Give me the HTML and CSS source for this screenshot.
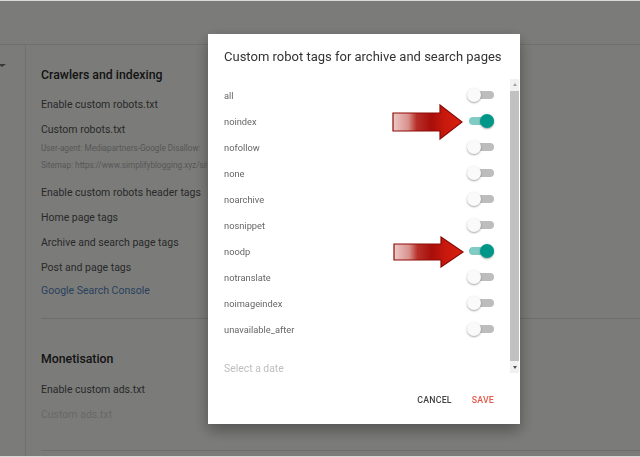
FILE: index.html
```html
<!DOCTYPE html>
<html lang="en">
<head>
    <meta charset="UTF-8">
    <title>Settings - Crawlers and indexing</title>
    <link rel="stylesheet" href="styles.css">
</head>
<body>

    <div class="page">
        <header class="topbar"></header>
        <div class="main">
            <aside class="sidebar"><span class="caret"></span></aside>
            <section class="settings">
                <div class="group">
                    <h2>Crawlers and indexing</h2>
                    <div class="item">Enable custom robots.txt</div>
                    <div class="item item-tight">Custom robots.txt</div>
                    <div class="hint">User-agent: Mediapartners-Google Disallow:</div>
                    <div class="hint hint-last">Sitemap: https://www.simplifyblogging.xyz/sitemap.xml</div>
                    <div class="item">Enable custom robots header tags</div>
                    <div class="item">Home page tags</div>
                    <div class="item">Archive and search page tags</div>
                    <div class="item item-short">Post and page tags</div>
                    <div class="item link">Google Search Console</div>
                </div>
                <div class="group group-second">
                    <h2>Monetisation</h2>
                    <div class="item">Enable custom ads.txt</div>
                    <div class="item disabled">Custom ads.txt</div>
                </div>
            </section>
        </div>
    </div>

    <div class="scrim"></div>

    <div class="dialog">
        <h1>Custom robot tags for archive and search pages</h1>

        <div class="dialog-body">
            <div class="tag-list">
                <div class="tag-row"><span>all</span><span class="toggle"></span></div>
                <div class="tag-row"><span>noindex</span><span class="toggle on"></span></div>
                <div class="tag-row"><span>nofollow</span><span class="toggle"></span></div>
                <div class="tag-row"><span>none</span><span class="toggle"></span></div>
                <div class="tag-row"><span>noarchive</span><span class="toggle"></span></div>
                <div class="tag-row"><span>nosnippet</span><span class="toggle"></span></div>
                <div class="tag-row"><span>noodp</span><span class="toggle on"></span></div>
                <div class="tag-row"><span>notranslate</span><span class="toggle"></span></div>
                <div class="tag-row"><span>noimageindex</span><span class="toggle"></span></div>
                <div class="tag-row"><span>unavailable_after</span><span class="toggle"></span></div>
                <div class="date-field">Select a date</div>
            </div>
            <div class="scrollbar">
                <span class="scroll-arrow up"></span>
                <span class="scroll-thumb"></span>
                <span class="scroll-arrow down"></span>
            </div>
        </div>

        <div class="actions">
            <button class="btn">CANCEL</button>
            <button class="btn btn-save">SAVE</button>
        </div>
    </div>

    <!-- red pointer arrows -->
    <svg class="pointer pointer-one" width="72" height="36" viewBox="0 0 72 36">
        <defs>
            <linearGradient id="arrowFill" x1="0" y1="0" x2="1" y2="0">
                <stop offset="0" stop-color="#edc9c6"/>
                <stop offset="0.22" stop-color="#d9918c"/>
                <stop offset="0.34" stop-color="#b8302a"/>
                <stop offset="0.55" stop-color="#a80e0a"/>
                <stop offset="0.75" stop-color="#c8190d"/>
                <stop offset="1" stop-color="#d8200f"/>
            </linearGradient>
        </defs>
        <polygon points="1,9 48,9 48,1 70,18 48,35 48,27 1,27" fill="url(#arrowFill)" stroke="#8e0a06" stroke-width="1.2"/>
    </svg>
    <svg class="pointer pointer-two" width="72" height="32" viewBox="0 0 72 32">
        <polygon points="1,8 48,8 48,1 70,16 48,31 48,24 1,24" fill="url(#arrowFill)" stroke="#8e0a06" stroke-width="1.2"/>
    </svg>

</body>
</html>
```

FILE: styles.css
```css
body {
    font-family: Roboto, 'Liberation Sans', sans-serif;
    background-color: #d9d9d9;
    margin: 0;
    width: 640px;
    height: 457px;
    overflow: hidden;
}
.page {
    background-color: #fdfefb;
    height: 455px;
    margin-top: 1px;
    display: flex;
    flex-direction: column;
    overflow: hidden;
}
.topbar {
    flex-shrink: 0;
    height: 43px;
    border-bottom: 1px solid #e6e6e6;
}
.main {
    flex: 1;
    display: flex;
}
.sidebar {
    width: 25px;
    border-right: 1px solid #e6e6e6;
}
.caret {
    display: block;
    width: 0;
    height: 0;
    margin: 19px 0 0 -2px;
    border-left: 4px solid transparent;
    border-right: 4px solid transparent;
    border-top: 3px solid #757575;
}
.settings {
    flex: 1;
    padding: 0 0 0 15px;
}
.group {
    padding-top: 22px;
    padding-bottom: 10px;
    border-bottom: 1px solid #e0e0e0;
}
.group-second {
    padding-top: 32px;
    padding-bottom: 18px;
}
h2 {
    margin: 0 0 14px;
    height: 16px;
    line-height: 16px;
    font-size: 12.3px;
    font-weight: 500;
    color: #2a2a2a;
}
.group-second h2 {
    margin-bottom: 15px;
}
.item {
    font-size: 10.5px;
    color: #555;
    height: 25px;
    line-height: 15px;
    white-space: nowrap;
}
.item-tight {
    height: 20px;
}
.item-short {
    height: 23px;
}
/* long values get cut off where the dialog covers them */
.hint {
    max-width: 166px;
    overflow: hidden;
    font-size: 8.2px;
    color: #b3b3b3;
    height: 17px;
    line-height: 12px;
    white-space: nowrap;
}
.hint-last {
    height: 26px;
}
.link {
    color: #5586c0;
}
.disabled {
    color: #d6d6d6;
}

.scrim {
    position: fixed;
    left: 0;
    right: 0;
    top: 1px;
    bottom: 1px;
    background-color: rgba(0, 0, 0, 0.515);
}

.dialog {
    position: fixed;
    left: 208px;
    top: 34px;
    width: 312px;
    height: 390px;
    background-color: #fff;
    box-shadow: 0 6px 14px rgba(0, 0, 0, 0.35);
    display: flex;
    flex-direction: column;
}
h1 {
    margin: 0;
    padding: 15px 0 0 16px;
    height: 30px;
    font-size: 13px;
    font-weight: 400;
    color: #333;
    white-space: nowrap;
}
.dialog-body {
    display: flex;
    height: 294px;
}
.tag-list {
    flex: 1;
    padding: 3px 14px 0 16px;
}
.tag-row {
    height: 26px;
    display: flex;
    align-items: center;
    justify-content: space-between;
    font-size: 9.3px;
    color: #666;
}
.toggle {
    position: relative;
    width: 29px;
    height: 14px;
}
.toggle::before {
    content: "";
    position: absolute;
    left: 5px;
    right: 2px;
    top: 3px;
    height: 8px;
    border-radius: 4px;
    background-color: #bdbdbd;
}
.toggle::after {
    content: "";
    position: absolute;
    left: 0;
    top: 0;
    width: 14px;
    height: 14px;
    border-radius: 50%;
    background-color: #fafafa;
    box-shadow: 0 1px 2px rgba(0, 0, 0, 0.35);
}
.toggle.on::before {
    left: 2px;
    background-color: #80cbc4;
}
.toggle.on::after {
    left: 13px;
    background-color: #009688;
}
.date-field {
    margin-top: 20px;
    font-size: 10.4px;
    color: #bdbdbd;
}
.scrollbar {
    width: 9px;
    margin-right: 1px;
    background-color: #f1f1f1;
    display: flex;
    flex-direction: column;
    align-items: center;
}
.scroll-arrow {
    width: 0;
    height: 0;
    border-left: 2.5px solid transparent;
    border-right: 2.5px solid transparent;
}
.scroll-arrow.up {
    margin: 4px 0 5px;
    border-bottom: 3px solid #a3a3a3;
}
.scroll-arrow.down {
    margin: 5px 0 4px;
    border-top: 3px solid #505050;
}
.scroll-thumb {
    flex: 1;
    width: 9px;
    background-color: #c1c1c1;
}
.actions {
    display: flex;
    justify-content: flex-end;
    gap: 20px;
    padding: 22px 26px 0 0;
}
.btn {
    background: none;
    border: none;
    padding: 0;
    font-family: Roboto, 'Liberation Sans', sans-serif;
    font-size: 8.8px;
    font-weight: 500;
    letter-spacing: 0.2px;
    color: #444;
    cursor: pointer;
}
.btn-save {
    color: #e7594b;
}

.pointer {
    position: fixed;
}
.pointer-one {
    left: 392px;
    top: 104px;
}
.pointer-two {
    left: 393px;
    top: 236px;
}
```
